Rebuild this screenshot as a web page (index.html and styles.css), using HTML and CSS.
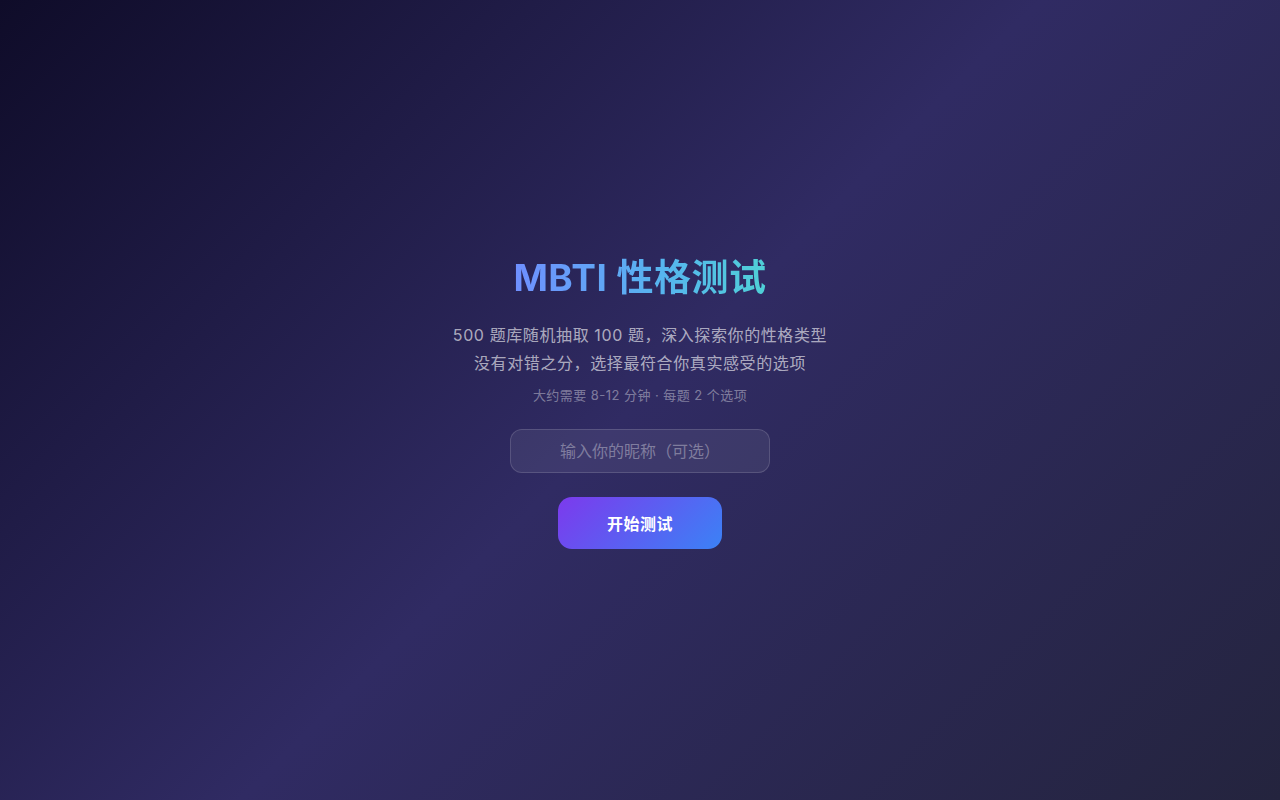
FILE: index.html
```html
<!DOCTYPE html>
<html lang="zh-CN">
<head>
<meta charset="utf-8">
<title>MBTI 性格测试</title>
<link rel="stylesheet" href="styles.css">
</head>
<body>
<main class="page">
  <section class="intro">
    <h1 class="title">MBTI 性格测试</h1>
    <p class="sub">500 题库随机抽取 100 题，深入探索你的性格类型<br>没有对错之分，选择最符合你真实感受的选项</p>
    <p class="meta">大约需要 8-12 分钟 · 每题 2 个选项</p>
    <input class="nick" type="text" placeholder="输入你的昵称（可选）">
    <button class="start" type="button">开始测试</button>
  </section>
</main>
</body>
</html>
```
FILE: styles.css
```css
html, body {
  margin: 0;
  padding: 0;
  height: 100%;
}
body {
  font-family: Inter, "Noto Sans CJK SC", sans-serif;
  background: linear-gradient(135deg, #0f0c29 0%, #302b63 50%, #24243e 100%);
  color: #fff;
}
.page {
  box-sizing: border-box;
  min-height: 100vh;
  padding-top: 4px;
  display: flex;
  align-items: center;
  justify-content: center;
}
.intro {
  display: flex;
  flex-direction: column;
  align-items: center;
  text-align: center;
}
.title {
  margin: 0 0 21px;
  font-size: 37px;
  line-height: 44px;
  letter-spacing: 0.5px;
  font-weight: 700;
  background: linear-gradient(90deg, #6f8fff 0%, #56b6ee 60%, #4fd0d6 100%);
  -webkit-background-clip: text;
  background-clip: text;
  color: transparent;
}
.sub {
  margin: 0;
  font-size: 16px;
  line-height: 28px;
  letter-spacing: 0.6px;
  color: rgba(255, 255, 255, 0.62);
}
.meta {
  margin: 8px 0 24px;
  font-size: 13px;
  line-height: 20px;
  letter-spacing: 0.45px;
  color: rgba(255, 255, 255, 0.4);
}
.nick {
  box-sizing: border-box;
  width: 260px;
  height: 44px;
  border-radius: 12px;
  border: 1px solid rgba(255, 255, 255, 0.14);
  background: rgba(255, 255, 255, 0.07);
  color: #fff;
  font-family: inherit;
  font-size: 16px;
  text-align: center;
  outline: none;
}
.nick::placeholder {
  color: rgba(255, 255, 255, 0.35);
}
.start {
  margin-top: 24px;
  width: 164px;
  height: 52px;
  border: none;
  border-radius: 14px;
  background: linear-gradient(135deg, #7c3aed 0%, #3b82f6 100%);
  color: #fff;
  font-family: inherit;
  font-size: 16px;
  font-weight: 700;
  letter-spacing: 0.5px;
  cursor: pointer;
}
```
